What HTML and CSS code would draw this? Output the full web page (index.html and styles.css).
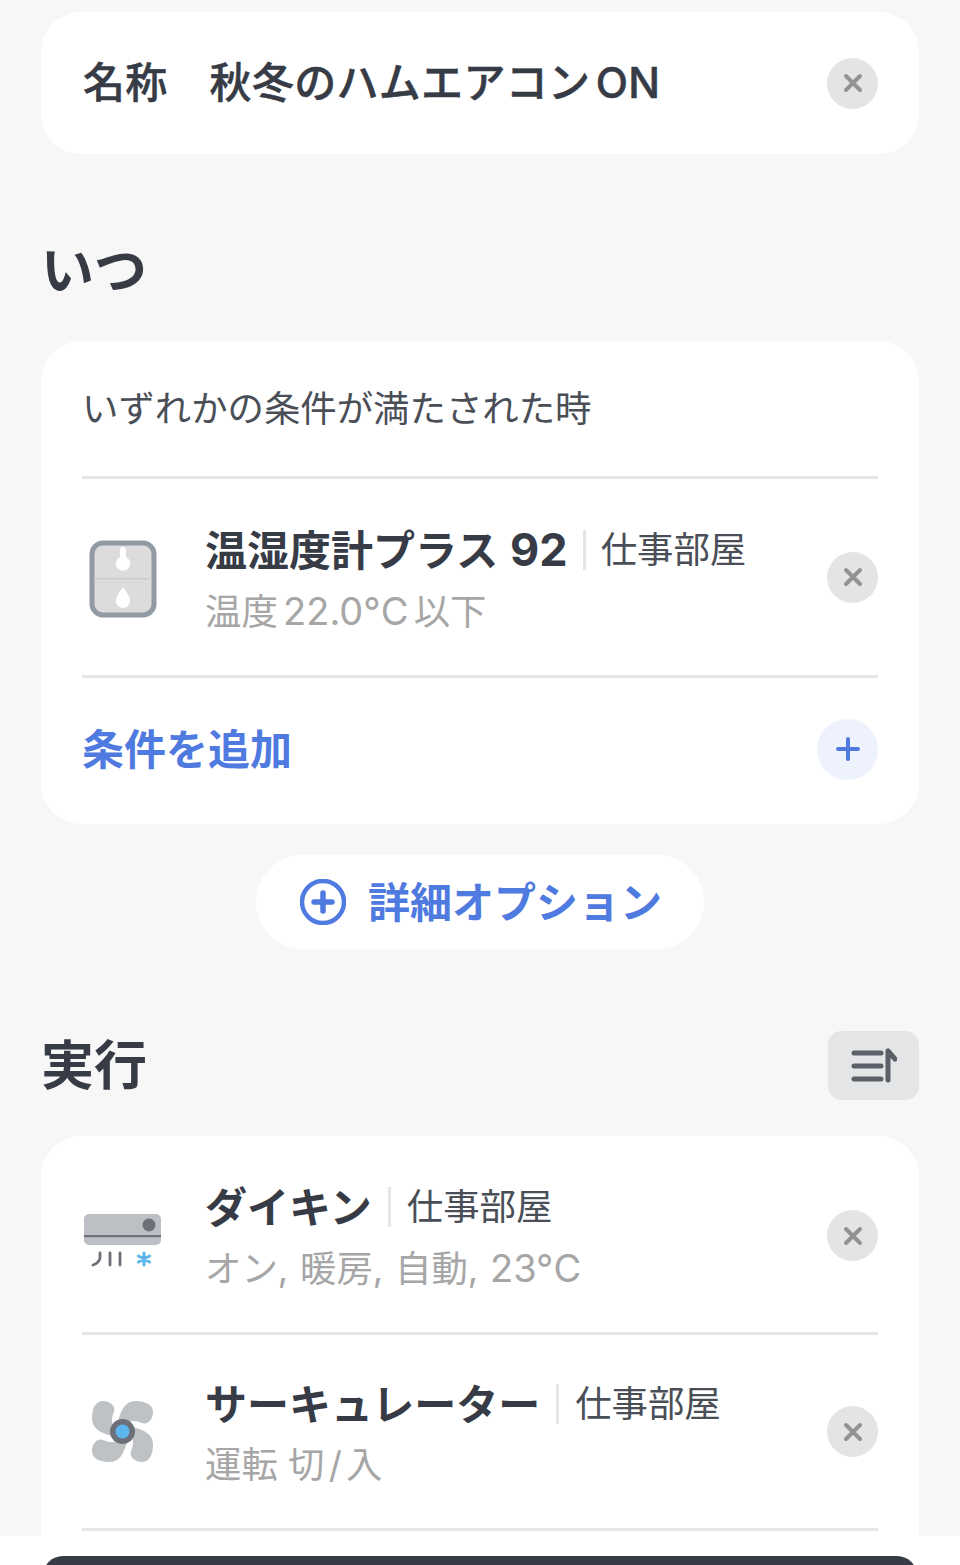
FILE: index.html
```html
<!DOCTYPE html>
<html lang="ja">
<head>
  <title>秋冬のハムエアコンON</title>
  <link rel="stylesheet" href="styles.css">
</head>
<body>
  <div class="page">
    <div class="card name-card">
      <div class="name-text"><span class="name-label">名称</span>秋冬のハムエアコン ON</div>
      <button class="close"><svg width="22" height="22" viewBox="0 0 22 22"><path d="M4 4 L18 18 M18 4 L4 18" /></svg></button>
    </div>

    <h2 class="section-title when-title">いつ</h2>

    <div class="card">
      <div class="cond-head">いずれかの条件が満たされた時</div>
      <div class="row">
        <div class="icon icon-meter">
          <svg width="68" height="78" viewBox="0 0 68 78">
            <rect x="3" y="3" width="62" height="72" rx="11" fill="#dcdcdc" stroke="#929aa3" stroke-width="5" />
            <rect x="5" y="38" width="58" height="1.5" fill="#cbcbcb" />
            <path d="M31 10 a3 3 0 0 1 6 0 v7 a7.2 7.2 0 1 1 -6 0 z" fill="#fff" />
            <path d="M34 47 C37 52 41 56 41 61 a7 7 0 0 1 -14 0 C27 56 31 52 34 47 z" fill="#fff" />
          </svg>
        </div>
        <div class="info">
          <div class="info-title"><b>温湿度計プラス <span class="num-big">92</span></b><span class="room room-first">仕事部屋</span></div>
          <div class="info-sub tight">温度 <span class="num">22.0°C</span> 以下</div>
        </div>
        <button class="close"><svg width="22" height="22" viewBox="0 0 22 22"><path d="M4 4 L18 18 M18 4 L4 18" /></svg></button>
      </div>
      <div class="add-row">
        <span class="add-text">条件を追加</span>
        <button class="add-btn"><svg width="24" height="24" viewBox="0 0 24 24"><path d="M12 2 V22 M2 12 H22" /></svg></button>
      </div>
    </div>

    <div class="option-wrap">
      <button class="option-btn">
        <svg width="46" height="46" viewBox="0 0 46 46"><circle cx="23" cy="23" r="21" /><path d="M23 14 V32 M14 23 H32" /></svg>
        <span class="option-text">詳細オプション</span>
      </button>
    </div>

    <div class="exec-head">
      <h2 class="section-title">実行</h2>
      <button class="sort-btn">
        <svg width="46" height="36" viewBox="0 0 46 36"><path d="M3 5 H30 M3 18 H30 M3 31 H30 M37 32 V3 M37 3 L44 11" /></svg>
      </button>
    </div>

    <div class="card exec-card">
      <div class="row exec-row">
        <div class="icon icon-ac">
          <svg width="80" height="58" viewBox="0 0 80 58">
            <rect x="1" y="0" width="77" height="31" rx="5" fill="#bcc0c5" />
            <rect x="1" y="21" width="77" height="2.2" fill="#6d7078" />
            <circle cx="66" cy="11" r="6.5" fill="#6d7078" />
            <path d="M10 51 Q16 49 17 44 V39 M27 39 V51 M37 39 V51" fill="none" stroke="#6d7078" stroke-width="2.8" stroke-linecap="round" />
            <path d="M61 39 V51 M55.5 42 L66.5 48 M66.5 42 L55.5 48" fill="none" stroke="#5bb6ee" stroke-width="3" stroke-linecap="round" />
          </svg>
        </div>
        <div class="info">
          <div class="info-title"><b>ダイキン</b><span class="room">仕事部屋</span></div>
          <div class="info-sub wide">オン, 暖房, 自動, <span class="num">23°C</span></div>
        </div>
        <button class="close"><svg width="22" height="22" viewBox="0 0 22 22"><path d="M4 4 L18 18 M18 4 L4 18" /></svg></button>
      </div>
      <div class="row exec-row">
        <div class="icon icon-fan">
          <svg width="62" height="62" viewBox="0 0 62 62">
            <g fill="#bfc2c5">
              <path d="M24 30 C19 24 19 17 22 11 C24 5 18 0 11 0 C4 0 0 7 0 17 C0 28 8 32 24 36 z" />
              <path transform="rotate(90 30.5 30.5)" d="M24 30 C19 24 19 17 22 11 C24 5 18 0 11 0 C4 0 0 7 0 17 C0 28 8 32 24 36 z" />
              <path transform="rotate(180 30.5 30.5)" d="M24 30 C19 24 19 17 22 11 C24 5 18 0 11 0 C4 0 0 7 0 17 C0 28 8 32 24 36 z" />
              <path transform="rotate(270 30.5 30.5)" d="M24 30 C19 24 19 17 22 11 C24 5 18 0 11 0 C4 0 0 7 0 17 C0 28 8 32 24 36 z" />
            </g>
            <circle cx="30.5" cy="30.5" r="12.5" fill="#6d7078" />
            <circle cx="30.5" cy="30.5" r="7" fill="#5bb6ee" />
          </svg>
        </div>
        <div class="info">
          <div class="info-title"><b>サーキュレーター</b><span class="room">仕事部屋</span></div>
          <div class="info-sub">運転 <span class="tighter">切 / 入</span></div>
        </div>
        <button class="close"><svg width="22" height="22" viewBox="0 0 22 22"><path d="M4 4 L18 18 M18 4 L4 18" /></svg></button>
      </div>
    </div>
  </div>

  <div class="footer">
    <div class="save-btn"></div>
  </div>
</body>
</html>
```

FILE: styles.css
```css
* {
  box-sizing: border-box;
}

html, body {
  margin: 0;
  padding: 0;
  height: 1565px;
  overflow: hidden;
}

body {
  position: relative;
  background: #f7f7f7;
  color: #363b45;
  font-family: Inter, "Noto Sans CJK JP", sans-serif;
}

.page {
  padding: 12px 41px 0;
}

button {
  border: none;
  padding: 0;
  font-family: inherit;
}

.card {
  background: #fff;
  border-radius: 40px;
}

.name-card {
  height: 142px;
  display: flex;
  align-items: center;
  justify-content: space-between;
  padding: 0 41px 0 42px;
}

.name-text {
  margin-bottom: 8px;
  font-size: 42px;
  font-weight: 500;
  -webkit-text-stroke: 0.5px #363b45;
  letter-spacing: 0.3px;
  word-spacing: -6px;
}

.name-label {
  margin-right: 42px;
}

.close {
  width: 51px;
  height: 51px;
  flex: none;
  border-radius: 50%;
  background: #e4e4e4;
  display: flex;
  align-items: center;
  justify-content: center;
}

.close path {
  fill: none;
  stroke: #929292;
  stroke-width: 4;
  stroke-linecap: round;
}

.section-title {
  margin: 0;
  font-size: 53px;
  font-weight: 700;
  line-height: 70px;
}

.when-title {
  margin: 82px 0 35px 0;
}

.cond-head {
  margin: 0 41px;
  height: 138px;
  padding-top: 41px;
  font-size: 36.4px;
  line-height: 54px;
  color: #4a4e57;
  border-bottom: 3px solid #e5e5e5;
}

.row {
  margin: 0 41px;
  height: 199px;
  display: flex;
  align-items: center;
  border-bottom: 3px solid #e5e5e5;
}

.icon {
  width: 123px;
  flex: none;
  display: flex;
  align-items: center;
}

.icon-meter svg {
  margin: 3px 0 0 7px;
}

.icon-ac svg {
  margin: 14px 0 0 1px;
}

.icon-fan svg {
  margin: 0 0 0 10px;
}

.info {
  flex: 1;
}

.exec-row .info {
  margin-bottom: 3px;
}

.info-title {
  display: flex;
  align-items: center;
  height: 60px;
  font-size: 36.4px;
}

.info-title b {
  margin-bottom: 3px;
  font-size: 42px;
  font-weight: 700;
  white-space: nowrap;
}

.num-big {
  margin-left: 2px;
  font-size: 45px;
}

.room {
  margin: 2px 0 0 16px;
  padding-left: 16px;
  border-left: 3px solid #e5e5e5;
  line-height: 40px;
  color: #4a4e57;
}

.room-first {
  margin-left: 15px;
  padding-left: 15px;
}

.info-sub {
  margin-top: 9px;
  font-size: 36.4px;
  line-height: 46px;
  color: #a6a6a6;
}

.info-sub.tight {
  word-spacing: -5px;
}

.info-sub.wide {
  word-spacing: 1.5px;
}

.tighter {
  word-spacing: -6px;
}

.num {
  font-size: 38px;
}

.add-row {
  margin: 0 41px;
  height: 146px;
  padding-bottom: 4px;
  display: flex;
  align-items: center;
  justify-content: space-between;
}

.add-text {
  margin-bottom: 6px;
  font-size: 42px;
  font-weight: 700;
  color: #4f7ae0;
}

.add-btn {
  width: 61px;
  height: 61px;
  border-radius: 50%;
  background: #edf2fc;
  display: flex;
  align-items: center;
  justify-content: center;
}

.add-btn path {
  fill: none;
  stroke: #4f7ae0;
  stroke-width: 4;
  stroke-linecap: round;
}

.option-wrap {
  display: flex;
  justify-content: center;
  margin-top: 31px;
}

.option-btn {
  width: 448px;
  height: 94px;
  padding-left: 2px;
  border-radius: 47px;
  background: #fff;
  display: flex;
  align-items: center;
  justify-content: center;
  gap: 22px;
  font-size: 42px;
  font-weight: 700;
  color: #4f7ae0;
}

.option-text {
  margin-bottom: 6px;
}

.option-btn circle, .option-btn path {
  fill: none;
  stroke: #4f7ae0;
  stroke-width: 4.5;
  stroke-linecap: round;
}

.option-btn path {
  stroke-width: 5.5;
}

.exec-head {
  margin-top: 82px;
  height: 69px;
  display: flex;
  align-items: center;
  justify-content: space-between;
}

.sort-btn {
  width: 91px;
  height: 69px;
  border-radius: 14px;
  background: #e4e5e7;
  display: flex;
  align-items: center;
  justify-content: center;
}

.sort-btn path {
  fill: none;
  stroke: #5c5f67;
  stroke-width: 5;
  stroke-linecap: round;
  stroke-linejoin: round;
}

.exec-card {
  margin-top: 36px;
  height: 500px;
  padding-top: 3px;
  border-radius: 40px 40px 0 0;
}

.exec-row {
  height: 196px;
}

.footer {
  position: absolute;
  left: 0;
  right: 0;
  bottom: 0;
  height: 29px;
  background: #fff;
  padding: 20px 43px 0;
}

.save-btn {
  height: 40px;
  border-radius: 24px;
  background: #363b45;
}
```
